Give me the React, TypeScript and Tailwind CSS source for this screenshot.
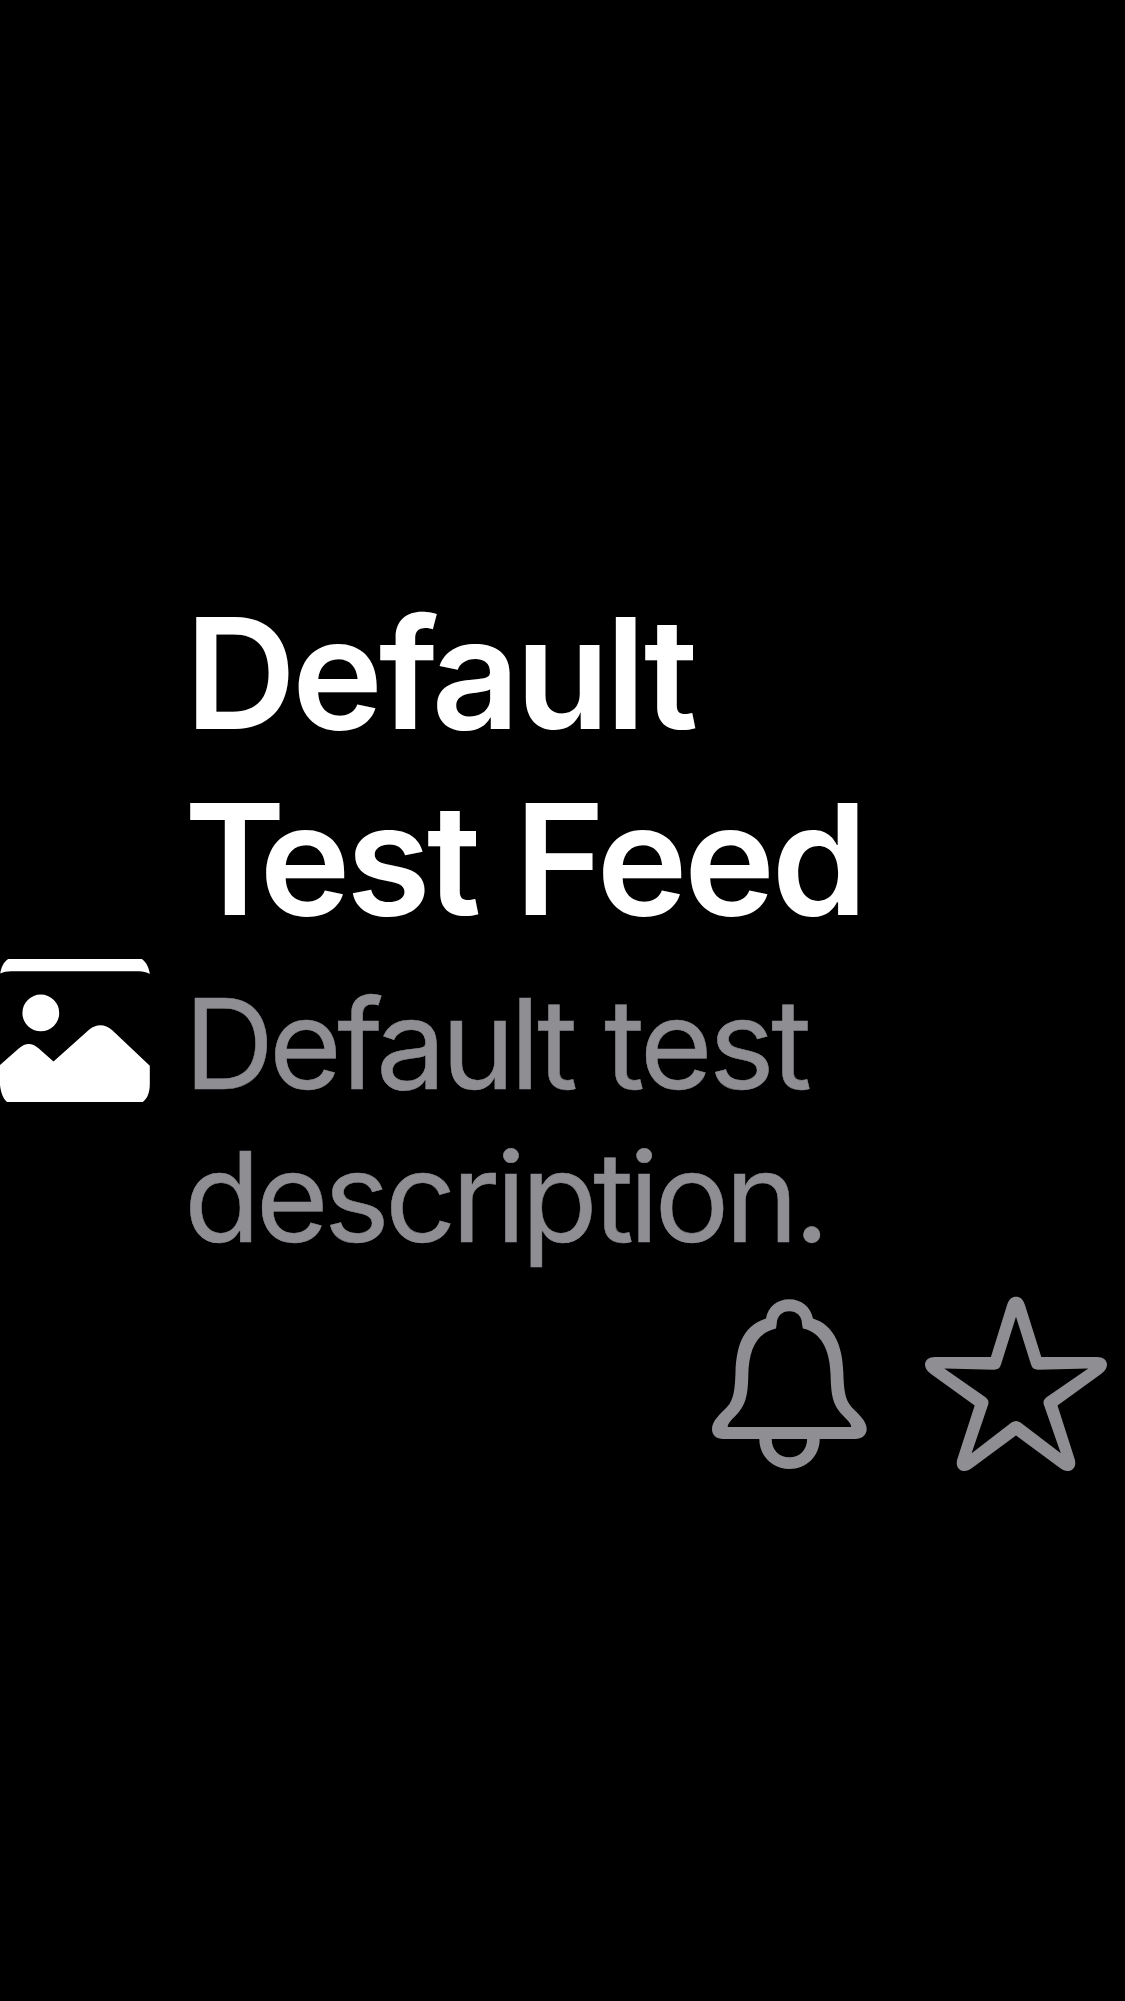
function PhotoIcon() {
  return (
    <svg width="150" height="180" viewBox="0 0 150 180" fill="#fff" aria-hidden="true">
      <path d="M0.3 33.5C1.2 27.5 3.5 22 8.2 19H141.8C146.2 22 149 27.5 149.8 34C146.5 32.2 143 31.3 139 31.3H11C7 31.3 3.5 32 0.3 33.5Z" />
      <circle cx="40.8" cy="72.9" r="18.4" />
      <path d="M0 125L19 108.3C25.5 102.6 32 102.6 38.5 108.3L53.5 121.6L89 89.8C96 83.7 105 83.7 112 90L149.8 125.7V144C149.8 152 147.5 158.5 142.8 162H7C3 158.5 0.8 152.5 0 145Z" />
    </svg>
  );
}

function BellIcon() {
  return (
    <svg width="180" height="200" viewBox="0 0 180 200" fill="#8e8e93" fillRule="evenodd" aria-hidden="true">
      <path d="M12 149C12 141 20 134 27 127C34 120 35 108 35.5 92C36.5 64 44 45 66 38.5C68 27 77 19.3 89.3 19.3C101.5 19.3 110.5 27 113 38.5C134 45 142.5 66 143.3 92C143.8 108 144.5 119 151.5 127C158.5 134 166.7 141 166.7 149C166.7 155 162 159 155 159H119.7C119.7 176 106.5 189 89.5 189C72.5 189 59.3 176 59.3 159H23.5C16 159 12 155 12 149ZM27.7 147H151.2C150.8 143 148 141 143 135.5C133.5 126 131 117 130.6 95C130 70 121 52 102.8 48.5L102 44C102 36 96.5 31.3 89.3 31.3C82 31.3 77 36 76.7 44L76 48.5C57 53 49 68 48.3 95C48 117 45 126 35.8 135.5C31 140.5 28 143 27.7 147ZM71.7 159C71.7 170 79 177.3 89.4 177.3C99.8 177.3 107.1 170 107.1 159Z" />
    </svg>
  );
}

function StarIcon() {
  return (
    <svg width="215" height="200" viewBox="0 0 215 200" fill="#8e8e93" fillRule="evenodd" aria-hidden="true">
      <path d="M106 16.7C110 16.7 113 19 114.8 24.5L131.3 77H187C193 77 197 80 197 84.8C197 88 195 91 191 94L147.5 125.5L164.8 179.5C166.5 186 163.5 191 157.5 191C155 191 152.5 190 150 188L106 155.5L62 188C59.5 190 57 191 54.5 191C48.5 191 45.5 186 47.2 179.5L64.7 125.5L21 94C17 91 15 88 15 84.8C15 80 19 77 25 77H80.9L97.2 24.5C99 19 102 16.7 106 16.7ZM106 36.8L91 84.5Q89.5 89.8 84 89.7L34.3 88.5L75.5 117.3Q79.5 120.3 78.2 124.5L61.6 173.3L101.5 142.6Q106 139.3 110.5 142.6L150.8 173.3L133.8 124.5Q132.5 120.3 136.5 117.3L178.3 88.5L128 89.7Q122.5 89.8 121 84.5Z" />
    </svg>
  );
}

export default function App() {
  return (
    <main className="flex h-[2001px] w-[1125px] overflow-hidden bg-black pt-[580px] font-['Inter',sans-serif]">
      <div className="w-[184px] shrink-0 pt-[360px]">
        <PhotoIcon />
      </div>
      <div className="flex flex-1 flex-col">
        <h1 className="text-[154px] leading-[186px] font-semibold whitespace-nowrap text-white">
          <span className="block pl-px tracking-[-4.3px]">Default</span>
          <span className="block tracking-[-4.2px] [word-spacing:3px]">
            <span className="tracking-[-26.3px]">T</span>est <span className="tracking-[-3.5px]">Feed</span>
          </span>
        </h1>
        <p className="mt-[15px] text-[125px] leading-[153px] whitespace-nowrap text-[#8e8e93] [-webkit-text-stroke:0.5px_#8e8e93]">
          <span className="block tracking-[-5.1px]">
            Default<span className="tracking-[-3.9px]"> test</span>
          </span>
          <span className="block tracking-[-4.8px]">description.</span>
        </p>
        <div className="mt-[7px] flex justify-end gap-[30px]">
          <BellIcon />
          <StarIcon />
        </div>
      </div>
    </main>
  );
}
